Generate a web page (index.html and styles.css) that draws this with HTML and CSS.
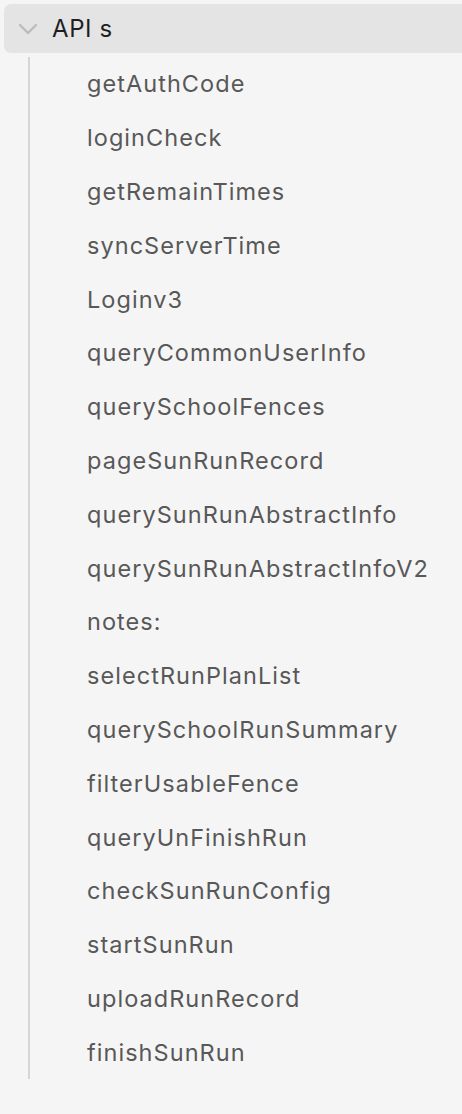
FILE: index.html
```html
<!DOCTYPE html>
<html>
<head>
<meta charset="utf-8">
<link rel="stylesheet" href="styles.css">
</head>
<body>
<div class="tree">
  <div class="header">
    <svg class="chev" width="20" height="12" viewBox="0 0 20 12"><path d="M2 2 L10 10 L18 2" fill="none" stroke="#bcbcbc" stroke-width="2.4" stroke-linecap="round" stroke-linejoin="round"/></svg>
    <span class="title">API s</span>
  </div>
  <div class="children">
    <div class="item">getAuthCode</div>
    <div class="item">loginCheck</div>
    <div class="item">getRemainTimes</div>
    <div class="item">syncServerTime</div>
    <div class="item">Loginv3</div>
    <div class="item">queryCommonUserInfo</div>
    <div class="item">querySchoolFences</div>
    <div class="item">pageSunRunRecord</div>
    <div class="item">querySunRunAbstractInfo</div>
    <div class="item">querySunRunAbstractInfoV2</div>
    <div class="item">notes:</div>
    <div class="item">selectRunPlanList</div>
    <div class="item">querySchoolRunSummary</div>
    <div class="item">filterUsableFence</div>
    <div class="item">queryUnFinishRun</div>
    <div class="item">checkSunRunConfig</div>
    <div class="item">startSunRun</div>
    <div class="item">uploadRunRecord</div>
    <div class="item">finishSunRun</div>
  </div>
</div>
</body>
</html>
```
FILE: styles.css
```css
html, body {
  margin: 0;
  padding: 0;
  background: #f5f5f5;
  font-family: Inter, "Noto Sans", sans-serif;
}
.tree {
  padding: 4px 0 0 4px;
}
.header {
  height: 49px;
  background: #e4e4e4;
  border-radius: 7px 0 0 7px;
  display: flex;
  align-items: center;
  padding-left: 14px;
}
.chev {
  display: block;
  margin-top: 1px;
}
.title {
  margin-left: 14px;
  font-size: 24px;
  letter-spacing: 0.6px;
  color: #1f1f1f;
}
.children {
  margin: 4px 0 0 24px;
  border-left: 2px solid #d6d6d6;
  padding: 0 0 0 57px;
}
.item {
  height: 53.8px;
  display: flex;
  align-items: center;
  font-size: 23.5px;
  letter-spacing: 1.05px;
  color: #585858;
  white-space: nowrap;
}
```
